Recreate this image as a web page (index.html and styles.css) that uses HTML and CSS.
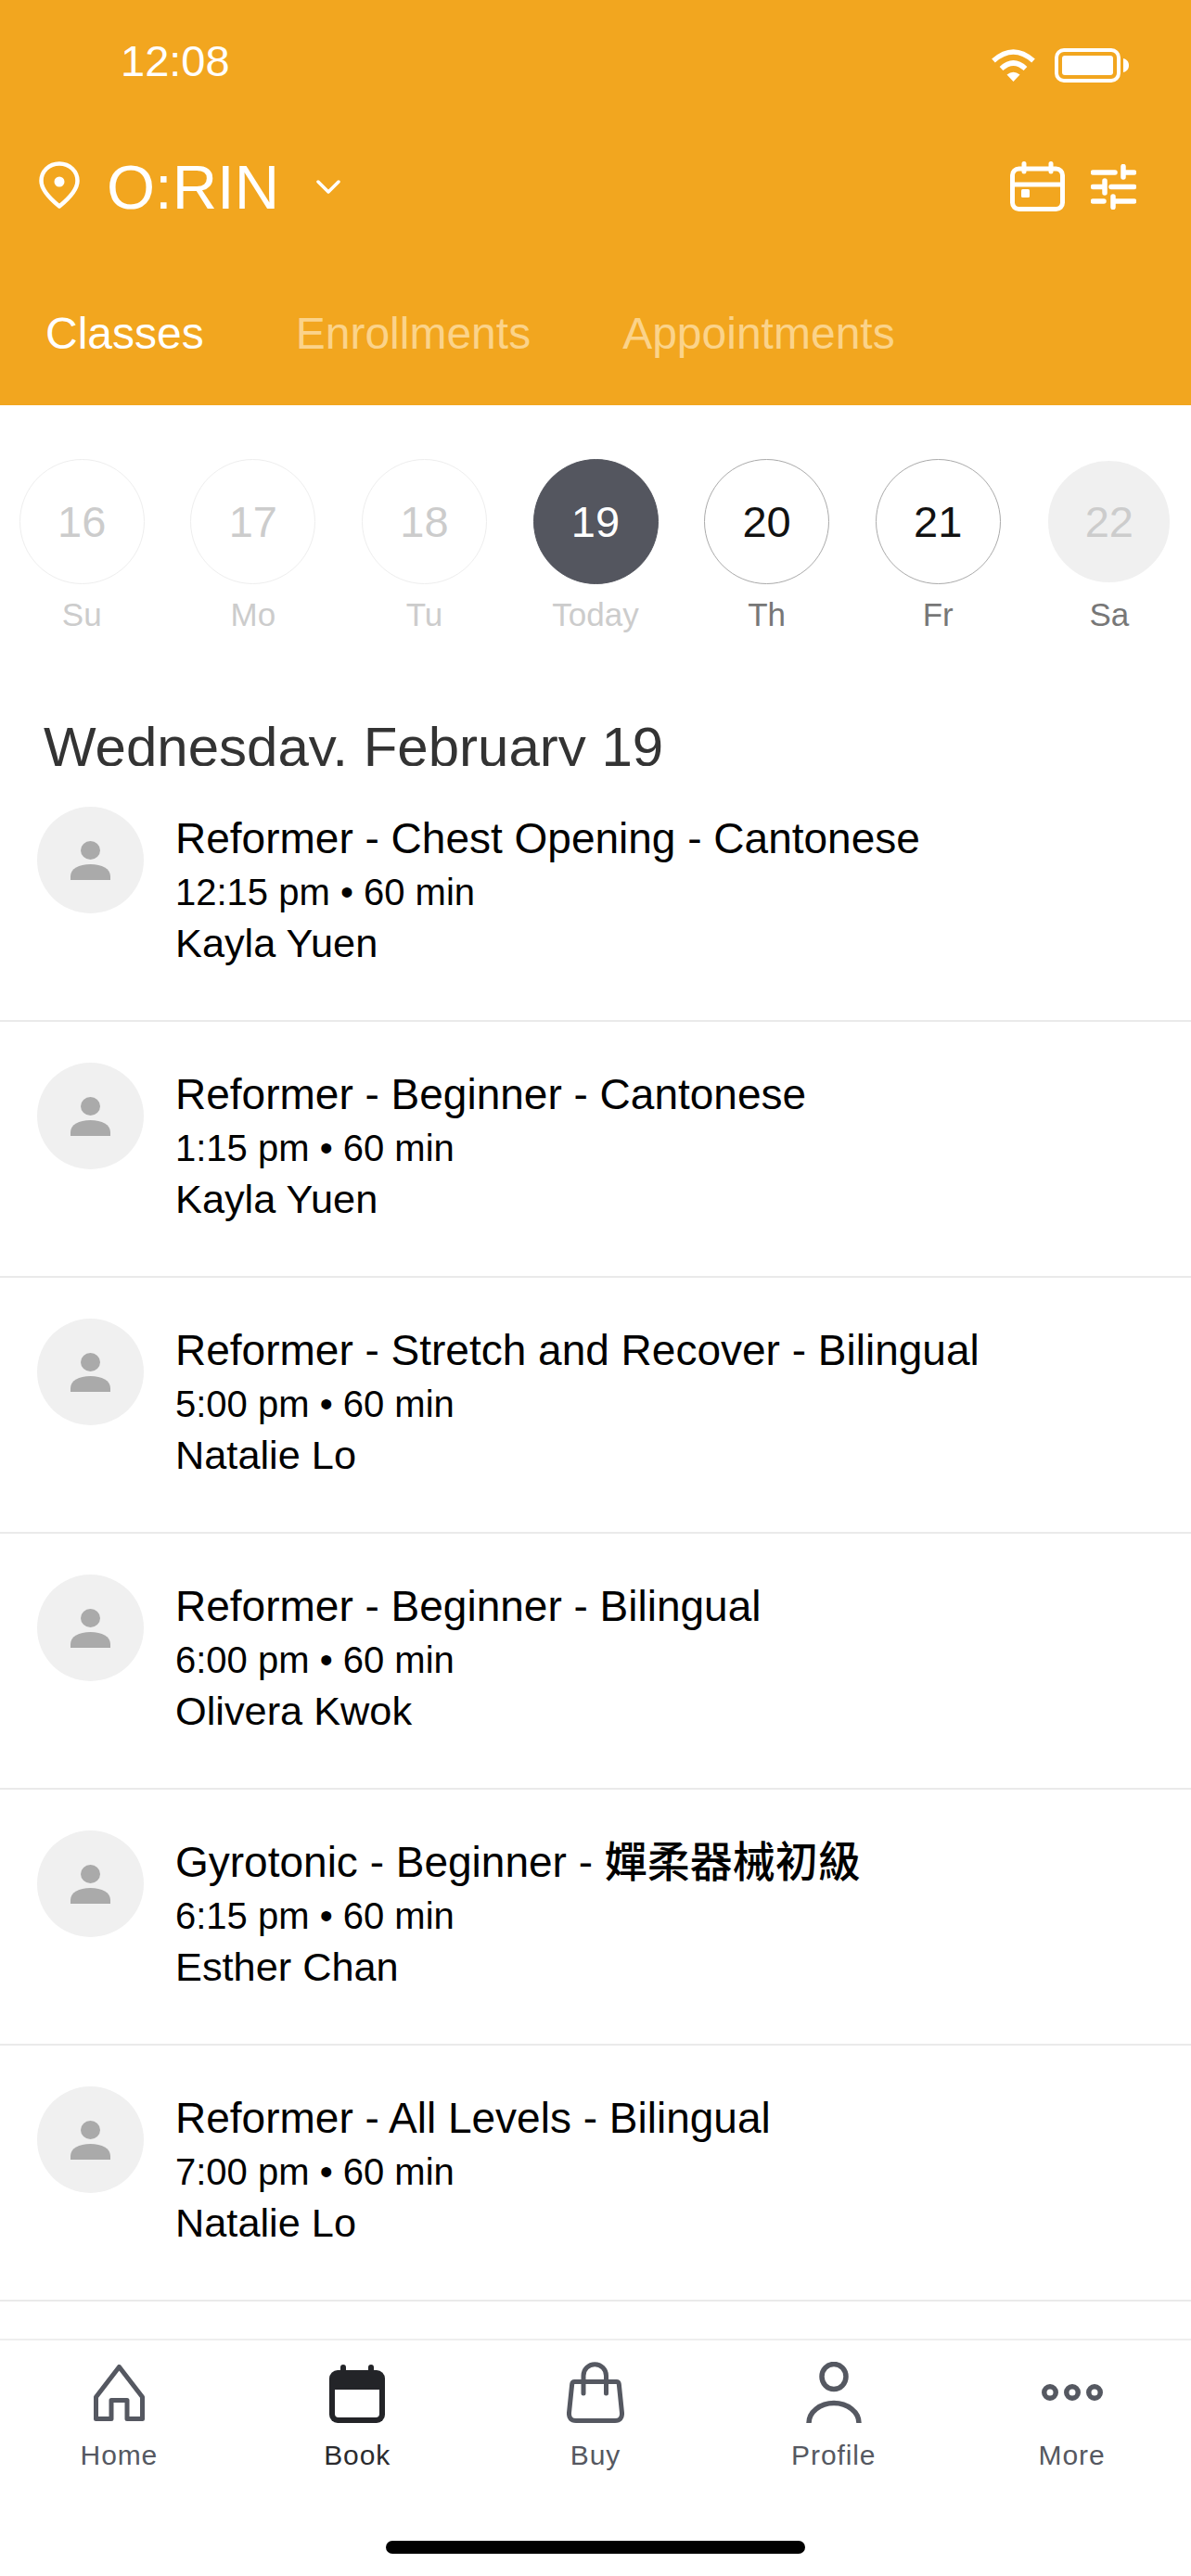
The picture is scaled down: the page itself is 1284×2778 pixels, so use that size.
FILE: index.html
```html
<!DOCTYPE html>
<html lang="en">
<head>
    <meta charset="UTF-8">
    <meta name="viewport" content="width=device-width, initial-scale=1.0">
    <title>O:RIN Classes</title>
    <link rel="stylesheet" href="styles.css">
</head>
<body>
    <header class="header">
        <div class="status-bar">
            <span class="time">12:08</span>
            <div class="status-icons">
                <svg width="49" height="36" viewBox="0 0 49 36" fill="none" stroke="#fff" stroke-width="5.5">
                    <path d="M3 13.5Q24.5 -5.5 46 13.5"/>
                    <path d="M11.5 22Q24.5 10 37.5 22"/>
                    <path d="M17.5 28.5Q24.5 23 31.5 28.5L24.5 36Z" fill="#fff" stroke="none"/>
                </svg>
                <svg width="80" height="37" viewBox="0 0 80 37" fill="none">
                    <rect x="2" y="2" width="67" height="33" rx="8" stroke="#fff" stroke-width="4"/>
                    <rect x="8" y="8" width="55" height="21" rx="3" fill="#fff"/>
                    <path d="M74 11C78 12 80 15 80 18.5C80 22 78 25 74 26Z" fill="#fff"/>
                </svg>
            </div>
        </div>
        <div class="title-bar">
            <svg class="pin" width="44" height="51" viewBox="0 0 44 51" fill="none">
                <path d="M22 2.5C10.5 2.5 2.5 11 2.5 21C2.5 31 14 42 22 48.5C30 42 41.5 31 41.5 21C41.5 11 33.5 2.5 22 2.5Z" stroke="#fff" stroke-width="4.5" stroke-linejoin="round"/>
                <circle cx="22" cy="22" r="5.5" fill="#fff"/>
            </svg>
            <span class="studio">O:RIN</span>
            <svg class="chevron" width="26" height="15" viewBox="0 0 26 15" fill="none">
                <path d="M2 2L13 13L24 2" stroke="#fff" stroke-width="3.5" stroke-linecap="round" stroke-linejoin="round"/>
            </svg>
            <div class="title-icons">
                <svg width="59" height="54" viewBox="0 0 59 54" fill="none" stroke="#fff" stroke-width="5" stroke-linecap="round">
                    <rect x="2.5" y="8" width="54" height="43.5" rx="7"/>
                    <path d="M2.5 25H56.5M15 2.5V11M44 2.5V11"/>
                    <rect x="12" y="30" width="9" height="9" rx="1.5" fill="#fff" stroke="none"/>
                </svg>
                <svg width="49" height="49" viewBox="0 0 49 49" fill="none" stroke="#fff" stroke-width="5.5" stroke-linecap="round">
                    <path d="M2.5 9H26M35 9H46.5M35 2.5V14"/>
                    <path d="M2.5 24.5H14M22 24.5H46.5M15 18V31"/>
                    <path d="M2.5 40H14M25 40H46.5M24 35V46.5"/>
                </svg>
            </div>
        </div>
        <nav class="tabs">
            <span class="tab active">Classes</span>
            <span class="tab">Enrollments</span>
            <span class="tab">Appointments</span>
        </nav>
    </header>

    <section class="date-strip">
        <div class="day past"><span class="circle">16</span><span class="day-name">Su</span></div>
        <div class="day past"><span class="circle">17</span><span class="day-name">Mo</span></div>
        <div class="day past"><span class="circle">18</span><span class="day-name">Tu</span></div>
        <div class="day today"><span class="circle">19</span><span class="day-name">Today</span></div>
        <div class="day open"><span class="circle">20</span><span class="day-name">Th</span></div>
        <div class="day open"><span class="circle">21</span><span class="day-name">Fr</span></div>
        <div class="day closed"><span class="circle">22</span><span class="day-name">Sa</span></div>
    </section>

    <h2 class="date-title">Wednesday, February 19</h2>

    <main class="class-list">
        <article class="class-row">
            <div class="avatar"><svg width="43" height="42" viewBox="0 0 43 42" fill="#aaa"><ellipse cx="21.5" cy="10" rx="10.5" ry="10"/><path d="M0 42V38C0 30 9 25 21.5 25C34 25 43 30 43 38V42Z"/></svg></div>
            <div class="class-info">
                <div class="class-name">Reformer - Chest Opening - Cantonese</div>
                <div class="class-time">12:15 pm • 60 min</div>
                <div class="class-teacher">Kayla Yuen</div>
            </div>
        </article>
        <article class="class-row">
            <div class="avatar"><svg width="43" height="42" viewBox="0 0 43 42" fill="#aaa"><ellipse cx="21.5" cy="10" rx="10.5" ry="10"/><path d="M0 42V38C0 30 9 25 21.5 25C34 25 43 30 43 38V42Z"/></svg></div>
            <div class="class-info">
                <div class="class-name">Reformer - Beginner - Cantonese</div>
                <div class="class-time">1:15 pm • 60 min</div>
                <div class="class-teacher">Kayla Yuen</div>
            </div>
        </article>
        <article class="class-row">
            <div class="avatar"><svg width="43" height="42" viewBox="0 0 43 42" fill="#aaa"><ellipse cx="21.5" cy="10" rx="10.5" ry="10"/><path d="M0 42V38C0 30 9 25 21.5 25C34 25 43 30 43 38V42Z"/></svg></div>
            <div class="class-info">
                <div class="class-name">Reformer - Stretch and Recover - Bilingual</div>
                <div class="class-time">5:00 pm • 60 min</div>
                <div class="class-teacher">Natalie Lo</div>
            </div>
        </article>
        <article class="class-row">
            <div class="avatar"><svg width="43" height="42" viewBox="0 0 43 42" fill="#aaa"><ellipse cx="21.5" cy="10" rx="10.5" ry="10"/><path d="M0 42V38C0 30 9 25 21.5 25C34 25 43 30 43 38V42Z"/></svg></div>
            <div class="class-info">
                <div class="class-name">Reformer - Beginner - Bilingual</div>
                <div class="class-time">6:00 pm • 60 min</div>
                <div class="class-teacher">Olivera Kwok</div>
            </div>
        </article>
        <article class="class-row">
            <div class="avatar"><svg width="43" height="42" viewBox="0 0 43 42" fill="#aaa"><ellipse cx="21.5" cy="10" rx="10.5" ry="10"/><path d="M0 42V38C0 30 9 25 21.5 25C34 25 43 30 43 38V42Z"/></svg></div>
            <div class="class-info">
                <div class="class-name">Gyrotonic - Beginner - <span class="cjk">嬋柔器械初級</span></div>
                <div class="class-time">6:15 pm • 60 min</div>
                <div class="class-teacher">Esther Chan</div>
            </div>
        </article>
        <article class="class-row">
            <div class="avatar"><svg width="43" height="42" viewBox="0 0 43 42" fill="#aaa"><ellipse cx="21.5" cy="10" rx="10.5" ry="10"/><path d="M0 42V38C0 30 9 25 21.5 25C34 25 43 30 43 38V42Z"/></svg></div>
            <div class="class-info">
                <div class="class-name">Reformer - All Levels - Bilingual</div>
                <div class="class-time">7:00 pm • 60 min</div>
                <div class="class-teacher">Natalie Lo</div>
            </div>
        </article>
    </main>

    <footer class="bottom-nav">
        <div class="nav-items">
            <div class="nav-item">
                <div class="nav-icon">
                    <svg width="55" height="61" viewBox="0 0 55 61" fill="none" stroke="#555861" stroke-width="5" stroke-linejoin="round">
                        <path d="M27.5 2.5L52.5 35V58.5H36V38.5H19V58.5H2.5V35Z"/>
                    </svg>
                </div>
                <span>Home</span>
            </div>
            <div class="nav-item current">
                <div class="nav-icon">
                    <svg class="book-icon" width="60" height="63" viewBox="0 0 60 63">
                        <path d="M15 3V10M45 3V10" stroke="#232428" stroke-width="6" stroke-linecap="round"/>
                        <rect y="6" width="60" height="57" rx="9" fill="#232428"/>
                        <path d="M6 27H54V53Q54 57 50 57H10Q6 57 6 53Z" fill="#fff"/>
                    </svg>
                </div>
                <span>Book</span>
            </div>
            <div class="nav-item">
                <div class="nav-icon">
                    <svg width="62" height="66" viewBox="0 0 62 66" fill="none" stroke="#555861" stroke-width="5" stroke-linecap="round">
                        <path d="M8.5 21.5H53.5Q56 21.5 56.3 24L59.5 55Q60 63.5 52 63.5H10Q2 63.5 2.5 55L5.7 24Q6 21.5 8.5 21.5Z"/>
                        <path d="M18 34V15A12.25 12.25 0 0 1 42.5 15V34"/>
                    </svg>
                </div>
                <span>Buy</span>
            </div>
            <div class="nav-item">
                <div class="nav-icon">
                    <svg width="60" height="66" viewBox="0 0 60 66" fill="none" stroke="#555861" stroke-width="5.5">
                        <ellipse cx="30" cy="16" rx="13" ry="13.5"/>
                        <path d="M3 66A27 21.5 0 0 1 57 66"/>
                    </svg>
                </div>
                <span>Profile</span>
            </div>
            <div class="nav-item">
                <div class="nav-icon">
                    <svg width="66" height="18" viewBox="0 0 66 18" fill="none" stroke="#555861" stroke-width="5.5">
                        <circle cx="9" cy="9" r="6.25"/>
                        <circle cx="33" cy="9" r="6.25"/>
                        <circle cx="57" cy="9" r="6.25"/>
                    </svg>
                </div>
                <span>More</span>
            </div>
        </div>
        <div class="home-indicator"></div>
    </footer>
</body>
</html>
```

FILE: styles.css
```css
body {
    font-family: 'Liberation Sans', 'Noto Sans CJK TC', sans-serif;
    margin: 0;
    padding: 0;
    width: 1284px;
    height: 2778px;
    display: flex;
    flex-direction: column;
    overflow: hidden;
    background-color: white;
    color: black;
}

svg {
    display: block;
}

/* orange header */
.header {
    background-color: #F2A61F;
    color: white;
    height: 437px;
    flex-shrink: 0;
}

.status-bar {
    height: 130px;
    display: flex;
    justify-content: space-between;
    padding: 0 67px 0 130px;
}

.time {
    font-size: 47px;
    line-height: 131px;
}

.status-icons {
    display: flex;
    gap: 20px;
    padding-top: 52px;
}

.title-bar {
    height: 142px;
    display: flex;
    align-items: center;
    padding: 0 59px 0 42px;
}

.pin {
    margin-top: -3px;
}

.studio {
    font-size: 67px;
    margin-left: 29px;
    line-height: 1;
}

.chevron {
    margin-left: 40px;
}

.title-icons {
    margin-left: auto;
    display: flex;
    align-items: center;
    gap: 28px;
}

.tabs {
    display: flex;
    gap: 99px;
    padding: 26px 0 0 49px;
}

.tab {
    font-size: 48px;
    line-height: 124px;
    color: #FBD38A;
}

.tab.active {
    color: white;
}

/* week picker */
.date-strip {
    display: grid;
    grid-template-columns: repeat(7, 184.6px);
    justify-content: center;
    padding-top: 58px;
    flex-shrink: 0;
}

.day {
    display: flex;
    flex-direction: column;
    align-items: center;
}

.circle {
    width: 135px;
    height: 135px;
    box-sizing: border-box;
    border-radius: 50%;
    border: 1.5px solid #eee;
    display: flex;
    align-items: center;
    justify-content: center;
    font-size: 47px;
    color: #ccc;
}

.day-name {
    font-size: 35px;
    line-height: 40px;
    margin-top: 13px;
    color: #ccc;
}

.today .circle {
    background-color: #54565F;
    border-color: #54565F;
    color: white;
}

.open .circle {
    border-color: #aaa;
    color: #111;
}

.open .day-name,
.closed .day-name {
    color: #777;
}

.closed .circle {
    background-color: #f0f0f0;
    border: 2px solid white;
}

.date-title {
    font-size: 60px;
    font-weight: normal;
    line-height: 60px;
    height: 50px;
    overflow: hidden;
    margin: 93px 0 0 47px;
    color: #333;
    flex-shrink: 0;
}

/* class rows */
.class-list {
    flex: 1;
}

.class-row {
    height: 276px;
    box-sizing: border-box;
    border-bottom: 2px solid #eaeaea;
    display: flex;
    padding: 44px 0 0 40px;
}

.avatar {
    width: 115px;
    height: 115px;
    border-radius: 50%;
    background-color: #f0f0f0;
    display: flex;
    align-items: center;
    justify-content: center;
    flex-shrink: 0;
}

.class-info {
    margin-left: 34px;
    padding-top: 6px;
}

.class-name {
    font-size: 46px;
    line-height: 56px;
}

.cjk {
    font-weight: 500;
}

.class-time {
    font-size: 40px;
    line-height: 56px;
    margin-top: 2px;
}

.class-teacher {
    font-size: 43.3px;
    line-height: 54px;
}

/* bottom tab bar */
.bottom-nav {
    border-top: 2px solid #eee;
    height: 256px;
    box-sizing: border-box;
    flex-shrink: 0;
    padding-top: 23px;
}

.nav-items {
    display: grid;
    grid-template-columns: repeat(5, 1fr);
}

.nav-item {
    display: flex;
    flex-direction: column;
    align-items: center;
    font-size: 30px;
    letter-spacing: 0.9px;
    color: #555861;
}

.nav-item.current {
    color: #2b2b2e;
}

.nav-icon {
    height: 66px;
    display: flex;
    align-items: center;
}

.book-icon {
    margin-top: 3px;
}

.nav-item span {
    line-height: 36px;
    margin-top: 17px;
}

.home-indicator {
    width: 452px;
    height: 14px;
    border-radius: 7px;
    background-color: black;
    margin: 74px auto 0;
}
```
